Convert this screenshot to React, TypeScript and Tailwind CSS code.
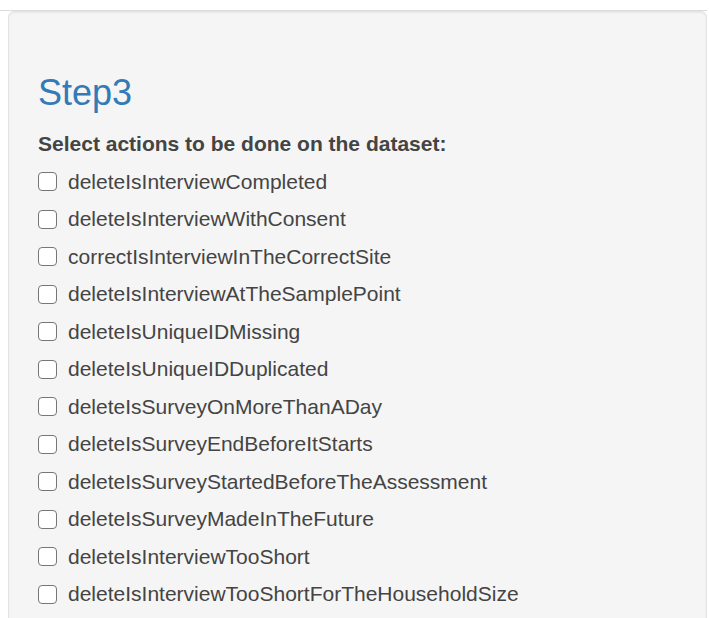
import React from 'react';

const actions = [
  'deleteIsInterviewCompleted',
  'deleteIsInterviewWithConsent',
  'correctIsInterviewInTheCorrectSite',
  'deleteIsInterviewAtTheSamplePoint',
  'deleteIsUniqueIDMissing',
  'deleteIsUniqueIDDuplicated',
  'deleteIsSurveyOnMoreThanADay',
  'deleteIsSurveyEndBeforeItStarts',
  'deleteIsSurveyStartedBeforeTheAssessment',
  'deleteIsSurveyMadeInTheFuture',
  'deleteIsInterviewTooShort',
  'deleteIsInterviewTooShortForTheHouseholdSize',
];

const ActionCheckbox: React.FC<{ label: string }> = ({ label }) => {
  return (
    <label className="flex h-[30px] items-center">
      <span className="h-[19px] w-[19px] shrink-0 rounded-[4px] border border-[#767676] bg-white" />
      <span className="ml-[11px] text-[21px] leading-[30px] text-[#444]">{label}</span>
    </label>
  );
};

export default function App() {
  return (
    <div className="h-[618px] overflow-hidden bg-white pt-[10px] font-['Liberation_Sans',Arial,sans-serif]">
      <div className="w-[707px] border-t border-[#dcdcdc]">
        <div className="ml-[8px] h-[640px] w-[699px] rounded-[6px] border border-[#e3e3e3] bg-[#f5f5f5] px-[29px] pt-[61px] shadow-[inset_0_1px_2px_rgba(0,0,0,0.06)]">
          <h1 className="text-[36px] leading-[1.1] text-[#337ab7]">Step3</h1>
          <div className="mt-[16px] text-[21px] font-bold leading-[30px] text-[#444]">
            Select actions to be done on the dataset:
          </div>
          <div className="mt-[8px] flex flex-col gap-[7.5px]">
            {actions.map((a) => (
              <ActionCheckbox key={a} label={a} />
            ))}
          </div>
        </div>
      </div>
    </div>
  );
}
